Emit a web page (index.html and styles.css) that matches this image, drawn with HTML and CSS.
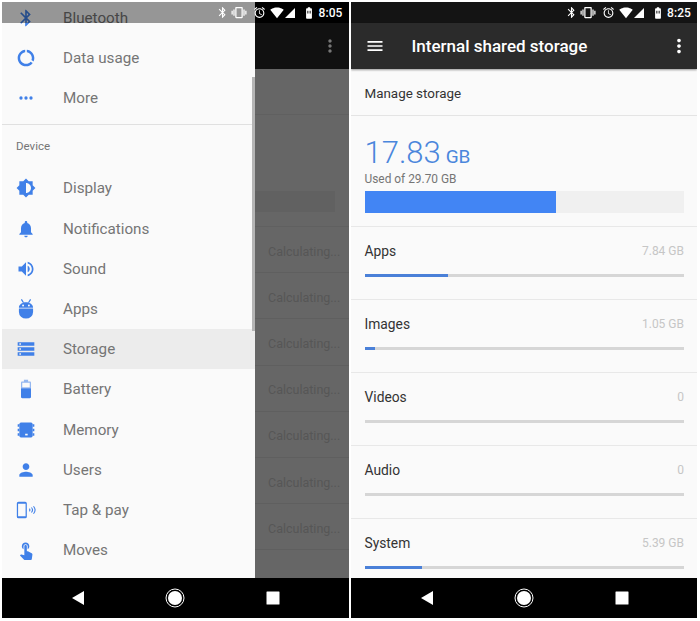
FILE: index.html
```html
<!DOCTYPE html>
<html lang="en">
<head>
<meta charset="utf-8">
<title>Storage settings</title>
<link rel="stylesheet" href="styles.css">
</head>
<body>
<svg class="defs" width="0" height="0" aria-hidden="true">
  <symbol id="i-bt" viewBox="0 0 24 24"><path d="M17.71 7.71L12 2h-1v7.59L6.41 5 5 6.41 10.59 12 5 17.59 6.41 19 11 14.41V22h1l5.71-5.71-4.3-4.29 4.3-4.29zM13 5.83l1.88 1.88L13 9.59V5.83zm1.88 10.46L13 18.17v-3.76l1.88 1.88z"/></symbol>
  <symbol id="i-vib" viewBox="0 0 24 24"><path d="M0 15h2V9H0v6zm3 2h2V7H3v10zm19-8v6h2V9h-2zm-3 8h2V7h-2v10zM16.5 3h-9C6.67 3 6 3.67 6 4.5v15c0 .83.67 1.5 1.5 1.5h9c.83 0 1.5-.67 1.5-1.5v-15c0-.83-.67-1.5-1.5-1.5zM16 19H8V5h8v14z"/></symbol>
  <symbol id="i-alarm" viewBox="0 0 24 24"><path d="M22 5.72l-4.6-3.86-1.29 1.53 4.6 3.86L22 5.72zM7.88 3.39L6.6 1.86 2 5.71l1.29 1.53 4.59-3.85zM12.5 8H11v6l4.75 2.85.75-1.23-4-2.37V8zM12 4c-4.97 0-9 4.03-9 9s4.03 9 9 9 9-4.03 9-9-4.03-9-9-9zm0 16c-3.87 0-7-3.13-7-7s3.13-7 7-7 7 3.13 7 7-3.13 7-7 7z"/></symbol>
  <symbol id="i-wifi" viewBox="0 0 24 24"><path d="M12 21L23.6 6.5C23.1 6.1 18.7 2.5 12 2.5S.9 6.1.4 6.5z"/></symbol>
  <symbol id="i-signal" viewBox="0 0 24 24"><path d="M2 22h20V2z"/></symbol>
  <symbol id="i-batt" viewBox="0 0 24 24"><path d="M15.67 4H14V2h-4v2H8.33C7.6 4 7 4.6 7 5.33v15.34C7 21.4 7.6 22 8.33 22h7.33c.74 0 1.34-.6 1.34-1.33V5.33C17 4.6 16.4 4 15.67 4z"/><path class="batt-mark" d="M9 8h2v5H9zM13 8h2v5h-2z"/></symbol>
  <symbol id="i-menu" viewBox="0 0 24 24"><path d="M3 18h18v-2H3v2zm0-5h18v-2H3v2zm0-7v2h18V6H3z"/></symbol>
  <symbol id="i-dots" viewBox="0 0 24 24"><path d="M12 8c1.1 0 2-.9 2-2s-.9-2-2-2-2 .9-2 2 .9 2 2 2zm0 2c-1.1 0-2 .9-2 2s.9 2 2 2 2-.9 2-2-.9-2-2-2zm0 6c-1.1 0-2 .9-2 2s.9 2 2 2 2-.9 2-2-.9-2-2-2z"/></symbol>
  <symbol id="i-back" viewBox="0 0 14 16"><path d="M13 1v14L1 8z"/></symbol>
  <symbol id="i-square" viewBox="0 0 14 14"><rect x="0.5" y="0.5" width="13" height="13" rx="0.5"/></symbol>
  <symbol id="i-home" viewBox="0 0 20 20"><circle cx="10" cy="10" r="7"/><circle class="ring" cx="10" cy="10" r="9"/></symbol>
</svg>

<main class="screens">
  <section class="phone">
    <div class="status-base"></div>
    <div class="toolbar toolbar-dim">
      <svg class="tool-dots dim-dots"><use href="#i-dots"/></svg>
    </div>
    <div class="behind">
      <div class="behind-top"></div>
      <div class="behind-summary"><div class="behind-bar"></div></div>
      <div class="calc-row">Calculating...</div>
      <div class="calc-row">Calculating...</div>
      <div class="calc-row">Calculating...</div>
      <div class="calc-row">Calculating...</div>
      <div class="calc-row">Calculating...</div>
      <div class="calc-row">Calculating...</div>
      <div class="calc-row">Calculating...</div>
    </div>
    <nav class="navbar">
      <svg class="nav-back"><use href="#i-back"/></svg>
      <svg class="nav-home"><use href="#i-home"/></svg>
      <svg class="nav-square"><use href="#i-square"/></svg>
    </nav>

    <aside class="drawer">
      <div class="drawer-list">
        <div class="item item-first">
          <svg class="ic" viewBox="0 0 24 24"><use href="#i-bt"/></svg><span>Bluetooth</span>
        </div>
        <div class="item">
          <svg class="ic" viewBox="0 0 24 24"><path d="M13 2.05v3.03c3.39.49 6 3.39 6 6.92 0 .9-.18 1.75-.48 2.54l2.6 1.53c.56-1.24.88-2.62.88-4.07 0-5.18-3.95-9.45-9-9.95zM12 19c-3.87 0-7-3.13-7-7 0-3.53 2.61-6.43 6-6.92V2.05c-5.06.5-9 4.76-9 9.95 0 5.52 4.47 10 9.99 10 3.31 0 6.24-1.61 8.06-4.09l-2.6-1.53C16.17 17.98 14.21 19 12 19z"/></svg><span>Data usage</span>
        </div>
        <div class="item">
          <svg class="ic" viewBox="0 0 24 24"><circle cx="6" cy="12" r="2"/><circle cx="12" cy="12" r="2"/><circle cx="18" cy="12" r="2"/></svg><span>More</span>
        </div>
        <div class="drawer-divider"></div>
        <div class="drawer-head">Device</div>
        <div class="item">
          <svg class="ic" viewBox="0 0 24 24"><path d="M20 15.31L23.31 12 20 8.69V4h-4.69L12 .69 8.69 4H4v4.69L.69 12 4 15.31V20h4.69L12 23.31 15.31 20H20v-4.69zM12 18V6c3.31 0 6 2.69 6 6s-2.69 6-6 6z"/></svg><span>Display</span>
        </div>
        <div class="item">
          <svg class="ic" viewBox="0 0 24 24"><path d="M12 22c1.1 0 2-.9 2-2h-4c0 1.1.89 2 2 2zm6-6v-5c0-3.07-1.64-5.64-4.5-6.32V4c0-.83-.67-1.5-1.5-1.5s-1.5.67-1.5 1.5v.68C7.63 5.36 6 7.92 6 11v5l-2 2v1h16v-1l-2-2z"/></svg><span>Notifications</span>
        </div>
        <div class="item">
          <svg class="ic" viewBox="0 0 24 24"><path d="M3 9v6h4l5 5V4L7 9H3zm13.5 3c0-1.77-1.02-3.29-2.5-4.03v8.05c1.48-.73 2.5-2.25 2.5-4.02zM14 3.23v2.06c2.89.86 5 3.54 5 6.71s-2.11 5.85-5 6.71v2.06c4.01-.91 7-4.49 7-8.77s-2.99-7.86-7-8.77z"/></svg><span>Sound</span>
        </div>
        <div class="item">
          <svg class="ic" viewBox="0 0 24 24"><path d="M3.500 10.500C3.500 7 7.300 4 12 4s8.500 3 8.500 6.500zM3.500 11.500h17v4a8.500 8 0 0 1-17 0z"/><path class="ic-line" d="M6.500 .5l2.500 4M17.500 .5l-2.500 4"/><circle class="ic-eye" cx="8.500" cy="7.800" r="1.100"/><circle class="ic-eye" cx="15.500" cy="7.800" r="1.100"/></svg><span>Apps</span>
        </div>
        <div class="item item-active">
          <svg class="ic" viewBox="0 0 24 24"><path d="M2 20h20v-4H2v4zm2-3h2v2H4v-2zM2 4v4h20V4H2zm4 3H4V5h2v2zm-4 7h20v-4H2v4zm2-3h2v2H4v-2z"/></svg><span>Storage</span>
        </div>
        <div class="item">
          <svg class="ic" viewBox="0 0 24 24"><path class="ic-soft" d="M16.500 3H14.500V1h-5v2H7.500C6.600 3 6 3.600 6 4.330V11h12V4.330C18 3.600 17.400 3 16.500 3z"/><path d="M6 11v10.670C6 22.400 6.600 23 7.500 23h9c.9 0 1.500-.6 1.500-1.330V11z"/><path class="ic-cut" d="M7.500 4.500h9V10h-9z"/></svg><span>Battery</span>
        </div>
        <div class="item">
          <svg class="ic" viewBox="0 0 24 24"><path d="M6 3h12a2 2 0 0 1 2 2v14a2 2 0 0 1-2 2H6a2 2 0 0 1-2-2V5a2 2 0 0 1 2-2z"/><path d="M2 5h2v3H2zM2 10.500h2v3H2zM2 16h2v3H2zM20 5h2v3h-2zM20 10.500h2v3h-2zM20 16h2v3h-2z"/><path class="ic-cut" d="M11 16.500h3v2h-3z"/></svg><span>Memory</span>
        </div>
        <div class="item">
          <svg class="ic" viewBox="0 0 24 24"><path d="M12 12c2.210 0 4-1.790 4-4s-1.790-4-4-4-4 1.790-4 4 1.790 4 4 4zm0 2c-2.670 0-8 1.340-8 4v2h16v-2c0-2.660-5.330-4-8-4z"/></svg><span>Users</span>
        </div>
        <div class="item">
          <svg class="ic" viewBox="0 0 24 24"><path d="M3 2h8a2 2 0 0 1 2 2v16a2 2 0 0 1-2 2H3a2 2 0 0 1-2-2V4a2 2 0 0 1 2-2zm-.5 2.500v15h9v-15z"/><path class="ic-wave" d="M16 10.500a2 2 0 0 1 0 3M18.500 9a4.500 4.500 0 0 1 0 6M21 7.500a7 7 0 0 1 0 9"/></svg><span>Tap &amp; pay</span>
        </div>
        <div class="item">
          <svg class="ic" viewBox="0 0 24 24"><path d="M9 11.240V7.500C9 6.120 10.120 5 11.500 5S14 6.120 14 7.500v3.740c1.210-.81 2-2.180 2-3.740C16 5.010 13.990 3 11.500 3S7 5.010 7 7.500c0 1.560.790 2.930 2 3.740zm9.840 4.630l-4.540-2.260c-.17-.07-.35-.11-.54-.11H13v-6c0-.83-.67-1.500-1.500-1.500S10 6.670 10 7.500v10.740l-3.430-.72c-.08-.01-.15-.03-.24-.03-.31 0-.59.130-.79.330l-.79.800 4.940 4.940c.27.270.650.440 1.060.440h6.790c.750 0 1.330-.55 1.440-1.280l.750-5.270c.01-.07.020-.14.020-.2 0-.620-.38-1.160-.91-1.380z"/></svg><span>Moves</span>
        </div>
      </div>
      <div class="scrollbar"></div>
    </aside>

    <div class="status status-over">
      <div class="status-scrim"></div>
      <svg class="st st-bt"><use href="#i-bt"/></svg>
      <svg class="st st-vib"><use href="#i-vib"/></svg>
      <svg class="st"><use href="#i-alarm"/></svg>
      <svg class="st st-wifi"><use href="#i-wifi"/></svg>
      <svg class="st st-signal"><use href="#i-signal"/></svg>
      <svg class="st st-batt"><use href="#i-batt"/></svg>
      <span class="clock">8:05</span>
    </div>
  </section>

  <section class="phone phone-light">
    <div class="status status-flow">
      <svg class="st st-bt"><use href="#i-bt"/></svg>
      <svg class="st st-vib"><use href="#i-vib"/></svg>
      <svg class="st"><use href="#i-alarm"/></svg>
      <svg class="st st-wifi"><use href="#i-wifi"/></svg>
      <svg class="st st-signal"><use href="#i-signal"/></svg>
      <svg class="st st-batt"><use href="#i-batt"/></svg>
      <span class="clock">8:25</span>
    </div>
    <header class="toolbar toolbar-main">
      <svg class="tool-menu"><use href="#i-menu"/></svg>
      <h1 class="tool-title">Internal shared storage</h1>
      <svg class="tool-dots"><use href="#i-dots"/></svg>
    </header>
    <div class="content">
      <div class="manage">Manage storage</div>
      <div class="summary">
        <div class="used"><span class="used-num">17.83</span> <span class="used-unit">GB</span></div>
        <div class="used-of">Used of 29.70 GB</div>
        <div class="big-track"><div class="big-fill"></div></div>
      </div>
      <div class="cat">
        <div class="cat-top"><span class="cat-name">Apps</span><span class="cat-val">7.84 GB</span></div>
        <div class="track"><div class="fill fill-apps"></div></div>
      </div>
      <div class="cat">
        <div class="cat-top"><span class="cat-name">Images</span><span class="cat-val">1.05 GB</span></div>
        <div class="track"><div class="fill fill-images"></div></div>
      </div>
      <div class="cat">
        <div class="cat-top"><span class="cat-name">Videos</span><span class="cat-val">0</span></div>
        <div class="track"></div>
      </div>
      <div class="cat">
        <div class="cat-top"><span class="cat-name">Audio</span><span class="cat-val">0</span></div>
        <div class="track"></div>
      </div>
      <div class="cat">
        <div class="cat-top"><span class="cat-name">System</span><span class="cat-val">5.39 GB</span></div>
        <div class="track"><div class="fill fill-system"></div></div>
      </div>
    </div>
    <nav class="navbar">
      <svg class="nav-back"><use href="#i-back"/></svg>
      <svg class="nav-home"><use href="#i-home"/></svg>
      <svg class="nav-square"><use href="#i-square"/></svg>
    </nav>
  </section>
</main>
</body>
</html>
```

FILE: styles.css
```css
* { box-sizing: border-box; }
html, body { margin: 0; padding: 0; background: #fff; }
body { width: 700px; height: 621px; overflow: hidden; font-family: Roboto, "Liberation Sans", sans-serif; }
.defs { position: absolute; }

.screens { display: flex; gap: 2px; padding: 2px 3px 3px 2px; height: 621px; }
.phone { position: relative; width: 347px; height: 616px; display: flex; flex-direction: column; overflow: hidden; background: #666; }
.phone-light { background: #fafafa; }

/* status bar */
.status-base { height: 21px; background: #000; flex: none; }
.status { height: 21px; display: flex; align-items: center; justify-content: flex-end; padding-right: 6px; color: #fff; fill: #fff; flex: none; }
.status-flow { background: #141414; }
.status-over { position: absolute; left: 0; top: 0; width: 100%; z-index: 2; }
.status-scrim { position: absolute; left: 0; top: 0; width: 253px; height: 100%; background: rgba(0,0,0,.4); }
.status-over > svg, .status-over > span { position: relative; }
.st { width: 13px; height: 13px; margin-right: 2px; fill: #fff; flex: none; }
.st-bt { width: 13px; margin-right: 2px; }
.st-vib { width: 16px; height: 15px; margin-right: 6px; }
.st-wifi { width: 14px; height: 14px; margin-left: 2px; margin-right: 0; }
.st-signal { width: 12px; height: 12px; margin-right: 6px; }
.st-batt { width: 14px; height: 14px; margin-right: 1px; }
.batt-mark { fill: #333; }
.clock { font-size: 12px; font-weight: 500; margin-left: 1px; letter-spacing: .1px; color: #fff; }

/* toolbars */
.toolbar { height: 46px; flex: none; display: flex; align-items: center; }
.toolbar-dim { background: #111; justify-content: flex-end; padding-right: 9px; }
.toolbar-main { background: #2b2b2b; color: #fff; padding: 0 7px 0 14px; box-shadow: 0 1px 2px rgba(0,0,0,.4); position: relative; }
.tool-menu { width: 20px; height: 20px; fill: #fff; flex: none; }
.tool-title { margin: 0 0 0 27px; flex: 1; font-size: 17px; font-weight: 500; white-space: nowrap; }
.tool-dots { width: 22px; height: 22px; fill: #fff; flex: none; }
.dim-dots { fill: #777; width: 20px; height: 20px; }

/* dimmed page behind the drawer */
.behind { flex: 1; display: flex; flex-direction: column; }
.behind-top { height: 46px; border-bottom: 1px solid #606060; flex: none; }
.behind-summary { height: 112px; flex: none; border-bottom: 1px solid #606060; padding: 76px 14px 0 0; display: flex; justify-content: flex-end; }
.behind-bar { width: 80px; height: 21px; background: #616161; }
.calc-row { height: 46.200px; flex: none; border-bottom: 1px solid #5f5f5f; display: flex; align-items: center; padding: 3px 0 0 266px; font-size: 12.500px; color: #565656; white-space: nowrap; }

/* nav */
.navbar { position: relative; height: 40px; flex: none; background: #000; display: flex; align-items: center; z-index: 3; }
.nav-back { width: 14px; height: 16px; fill: #fff; margin-left: 69px; }
.nav-home { width: 20px; height: 20px; fill: #fff; margin-left: 80px; }
.nav-square { width: 14px; height: 14px; fill: #fff; margin-left: 81px; }
.ring { fill: none; stroke: #fff; stroke-width: 1; }

/* drawer */
.drawer { position: absolute; left: 0; top: 0; bottom: 40px; width: 253px; background: #fafafa; overflow: hidden; z-index: 1; }
.drawer-list { display: flex; flex-direction: column; margin-top: -4px; }
.item { height: 40.200px; flex: none; display: flex; align-items: center; padding-left: 12px; font-size: 15.200px; color: #757575; }
.item-active { background: #ececec; }
.item span { margin-left: 25px; }
.ic { width: 24px; height: 20px; flex: none; fill: #4080e8; }
.ic-line { fill: none; stroke: #4080e8; stroke-width: 1.500; }
.ic-eye { fill: #fff; }
.ic-soft { opacity: .55; }
.ic-cut { fill: #fafafa; }
.ic-wave { fill: none; stroke: #4080e8; stroke-width: 1.300; }
.drawer-divider { height: 1px; background: #e0e0e0; margin-top: 5.500px; flex: none; }
.drawer-head { height: 43.300px; flex: none; padding: 14px 0 0 14px; font-size: 11.500px; color: #757575; }
.scrollbar { position: absolute; right: 0; top: 75px; width: 3px; height: 254px; background: #b5b5b5; }

/* right content */
.content { flex: 1; display: flex; flex-direction: column; overflow: hidden; }
.manage { height: 47px; flex: none; border-bottom: 1px solid #e4e4e4; padding: 2px 0 0 14px; display: flex; align-items: center; font-size: 13.400px; color: #333; }
.summary { height: 111px; flex: none; border-bottom: 1px solid #e8e8e8; padding: 18px 13px 0 14px; }
.used { color: #4a86dc; height: 37px; line-height: 37px; white-space: nowrap; }
.used-num { font-size: 31px; font-weight: 300; }
.used-unit { font-size: 19px; font-weight: 400; margin-left: 1px; }
.used-of { font-size: 11.900px; color: #757575; height: 17px; line-height: 16px; }
.big-track { height: 22px; margin-top: 3px; background: #f0f0f0; }
.big-fill { width: 60%; height: 100%; background: #4285f4; }
.cat { height: 73.050px; flex: none; border-bottom: 1px solid #e8e8e8; padding: 15px 13px 0 14px; }
.cat-top { display: flex; justify-content: space-between; align-items: center; height: 18px; }
.cat-name { font-size: 13.800px; color: #333; }
.cat-val { font-size: 12px; color: #c6c6c6; }
.track { height: 3px; margin-top: 14px; background: #d6d6d6; }
.fill { height: 100%; background: #4a80d8; }
.fill-apps { width: 26%; }
.fill-images { width: 3.200%; }
.fill-system { width: 18%; }
```
